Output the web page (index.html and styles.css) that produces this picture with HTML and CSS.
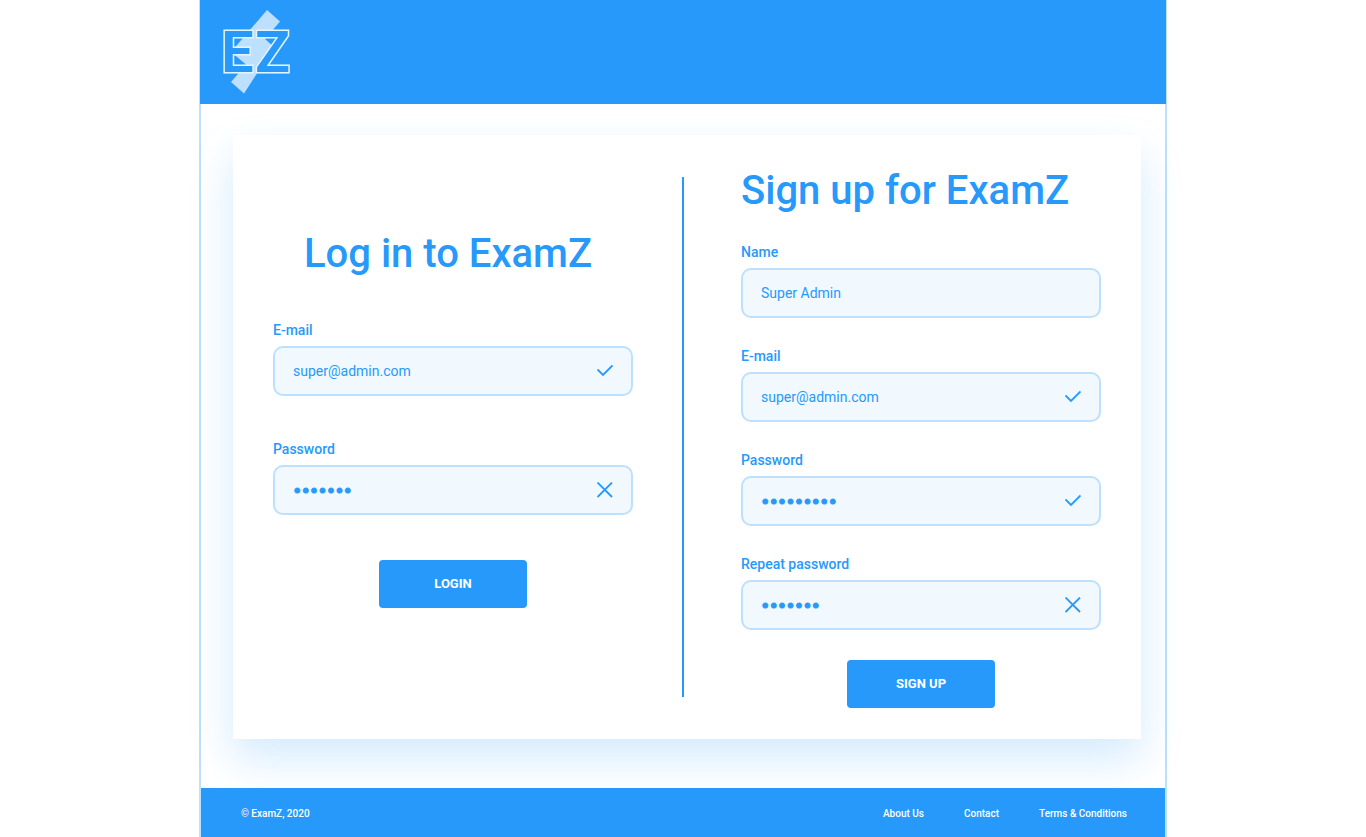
FILE: index.html
```html
<!DOCTYPE html>
<html lang="en">
<head>
<meta charset="utf-8">
<meta name="viewport" content="width=device-width, initial-scale=1">
<title>ExamZ</title>
<link rel="stylesheet" href="styles.css">
</head>
<body>
<div class="page">
  <header class="header">
    <svg class="logo" viewBox="0 0 74 88" role="img" aria-label="ExamZ">
      <path class="logo-bolt" d="M47 2 60 13.500 45 31 54 39 24 85.500 11 74 26 56.500 11 44Z"/>
      <text class="logo-text" x="1" y="64">E</text>
      <text class="logo-text" x="35" y="64">Z</text>
    </svg>
  </header>
  <main class="main">
    <div class="card">
      <form class="form form-login">
        <h1 class="title title-center">Log in to ExamZ</h1>
        <div class="field">
          <label class="label" for="login-email">E-mail</label>
          <div class="control">
            <input class="input" id="login-email" type="email" value="super@admin.com">
            <svg class="icon" viewBox="0 0 16 16" aria-hidden="true"><path d="M.5 6.500 6 12 15.500 2.500"/></svg>
          </div>
        </div>
        <div class="field">
          <label class="label" for="login-password">Password</label>
          <div class="control">
            <input class="input input-password" id="login-password" type="password" value="exam123">
            <svg class="icon" viewBox="0 0 16 16" aria-hidden="true"><path d="M.5 .5 15 15M15 .5 .5 15"/></svg>
          </div>
        </div>
        <button class="button" type="button">LOGIN</button>
      </form>
      <div class="divider"></div>
      <form class="form form-signup">
        <h1 class="title">Sign up for ExamZ</h1>
        <div class="field">
          <label class="label" for="name">Name</label>
          <div class="control">
            <input class="input" id="name" type="text" value="Super Admin">
          </div>
        </div>
        <div class="field">
          <label class="label" for="email">E-mail</label>
          <div class="control">
            <input class="input" id="email" type="email" value="super@admin.com">
            <svg class="icon" viewBox="0 0 16 16" aria-hidden="true"><path d="M.5 6.500 6 12 15.500 2.500"/></svg>
          </div>
        </div>
        <div class="field">
          <label class="label" for="password">Password</label>
          <div class="control">
            <input class="input input-password" id="password" type="password" value="exam12345">
            <svg class="icon" viewBox="0 0 16 16" aria-hidden="true"><path d="M.5 6.500 6 12 15.500 2.500"/></svg>
          </div>
        </div>
        <div class="field">
          <label class="label" for="repeat">Repeat password</label>
          <div class="control">
            <input class="input input-password" id="repeat" type="password" value="exam123">
            <svg class="icon" viewBox="0 0 16 16" aria-hidden="true"><path d="M.5 .5 15 15M15 .5 .5 15"/></svg>
          </div>
        </div>
        <button class="button" type="button">SIGN UP</button>
      </form>
    </div>
  </main>
  <footer class="footer">
    <span>© ExamZ, 2020</span>
    <nav class="links">
      <a href="#">About Us</a>
      <a href="#">Contact</a>
      <a href="#">Terms &amp; Conditions</a>
    </nav>
  </footer>
</div>
</body>
</html>
```
FILE: styles.css
```css
* { box-sizing: border-box; }
body {
  margin: 0;
  background: #fff;
  color: #2699fb;
  font-family: Roboto, "Liberation Sans", sans-serif;
  font-size: 14px;
}
.page {
  display: flex;
  flex-direction: column;
  max-width: 968px;
  min-height: 100vh;
  margin: 0 auto;
  border: solid #bce0fd;
  border-width: 0 2px;
}
.header {
  margin: 0 -1px;
  padding: 8px 20px;
  background: #2699fb;
}
.logo {
  display: block;
  width: 74px;
  height: 88px;
}
.logo-bolt { fill: #bce0fd; }
.logo-text {
  fill: #2699fb;
  stroke: #e4f5ff;
  stroke-width: 3;
  paint-order: stroke;
  font-size: 58px;
  font-weight: 600;
}
.main {
  flex: 1;
  padding: 31px 24px 49px 32px;
}
.card {
  display: flex;
  padding: 32px 40px 31px;
  background: #fff;
  box-shadow: 0 20px 40px rgba(38, 153, 251, 0.2);
}
.form {
  display: flex;
  flex: 1;
  flex-direction: column;
}
.divider {
  width: 2px;
  margin: 10px 57px 11px 49px;
  background: #2699fb;
}
.title {
  margin: 0;
  font-size: 40px;
  font-weight: 500;
  line-height: 48px;
}
.title-center {
  padding-right: 10px;
  text-align: center;
}
.form-login { padding-top: 63px; }
.form-login .title { margin-bottom: 44px; }
.form-login .field { margin-bottom: 45px; }
.form-signup .title { margin-bottom: 29px; }
.form-signup .field { margin-bottom: 30px; }
.label {
  display: block;
  margin-bottom: 8px;
  font-weight: 500;
  line-height: 16px;
}
.control {
  display: flex;
  align-items: center;
  height: 50px;
  padding: 0 18px;
  border: 2px solid #bce0fd;
  border-radius: 10px;
  background: #f1f9ff;
}
.input {
  flex: 1;
  min-width: 0;
  padding: 0;
  border: 0;
  outline: 0;
  background: none;
  color: inherit;
  font: inherit;
}
.input-password {
  padding-top: 2px;
  font-family: "DejaVu Sans Mono", monospace;
  font-weight: 700;
  -webkit-text-stroke: 1px #2699fb;
}
.icon {
  width: 16px;
  height: 16px;
  fill: none;
  stroke: #2699fb;
  stroke-width: 1.8;
}
.button {
  align-self: center;
  width: 148px;
  height: 48px;
  padding: 0 0 2px;
  border: 0;
  border-radius: 4px;
  background: #2699fb;
  color: #fff;
  font: inherit;
  font-size: 13px;
  font-weight: 700;
}
.footer {
  display: flex;
  align-items: center;
  justify-content: space-between;
  padding: 19px 38px 16px 40px;
  background: #2699fb;
  color: #fff;
  font-size: 10px;
  font-weight: 500;
  line-height: 14px;
}
.links {
  display: flex;
  gap: 40px;
}
.links a {
  color: inherit;
  text-decoration: none;
}
```
